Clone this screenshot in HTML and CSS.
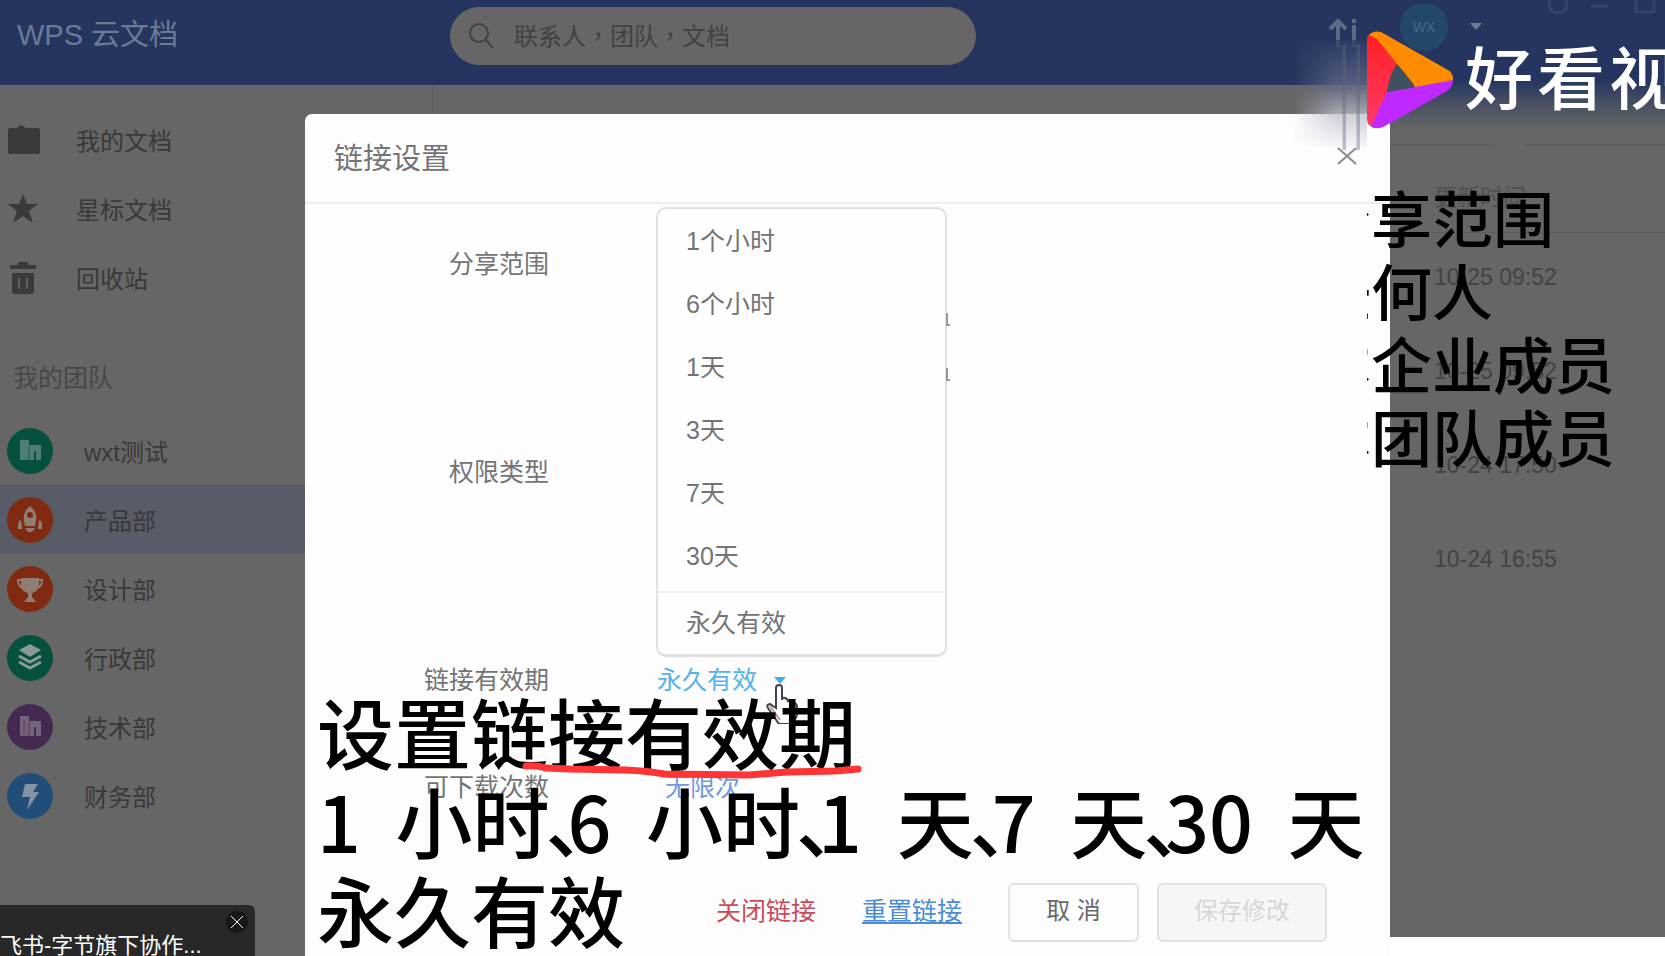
FILE: index.html
```html
<!DOCTYPE html>
<html lang="zh-CN">
<head>
<meta charset="utf-8">
<title>WPS 云文档</title>
<link rel="stylesheet" href="styles.css">
</head>
<body>
<div class="stage">
  <div class="app">
    <header class="topbar">
      <h1 class="brand">WPS 云文档</h1>
      <label class="search">
        <svg width="28" height="28" viewBox="0 0 28 28" fill="none" stroke="#414141" stroke-width="2"><circle cx="11" cy="11" r="9"/><path d="M17 17l8 9"/></svg>
        <input type="search" lang="zh-Hant" aria-label="搜索" placeholder="联系人，团队，文档">
      </label>
      <div class="tools">
        <svg width="30" height="30" viewBox="0 0 30 30" fill="none" stroke="#5f6a83" stroke-width="4"><path d="M10 30V5M2 12l8-8 8 8M26 8v22M26 2v4"/></svg>
        <span class="avatar">WX</span>
        <svg class="caret" width="12" height="7" viewBox="0 0 12 7"><path d="M0 0h12L6 7z" fill="#6f7890"/></svg>
        <svg class="winctl" width="110" height="16" viewBox="0 0 110 16" fill="none" stroke="#34436c" stroke-width="3"><path d="M4 0a9 9 0 1 0 16 0M45 6h17M90 0v12h18V0"/></svg>
      </div>
    </header>
    <div class="content">
      <aside class="sidebar">
        <nav class="nav">
          <a class="nav-item" href="#"><svg width="34" height="32" viewBox="0 0 34 32" fill="#3a3a3a"><path d="M3 4h7l4-3 5 3h12q2 0 2 2v22q0 2-2 2H3q-2 0-2-2V6q0-2 2-2z"/></svg>我的文档</a>
          <a class="nav-item" href="#"><svg width="34" height="32" viewBox="0 0 34 32" fill="#3a3a3a"><path d="M16 1l4 10h11l-9 7 4 12-10-7-10 7 4-12-9-7h11z"/></svg>星标文档</a>
          <a class="nav-item" href="#"><svg width="34" height="34" viewBox="0 0 34 34"><path d="M11 4V1h10v3h8v4H3V4zM5 12h22v18q0 3-3 3H8q-3 0-3-3z" fill="#3a3a3a"/><path d="M12 17v11M20 17v11" stroke="#606060" stroke-width="2"/></svg>回收站</a>
        </nav>
        <h2 class="group">我的团队</h2>
        <nav class="teams">
          <a class="team" href="#"><svg width="46" height="46" viewBox="0 0 46 46"><circle cx="23" cy="23" r="23" fill="#06503f"/><path d="M13 12h9v5h12v15h-5v-9h-2v9H13z" fill="#4f7d74"/><path d="M22 18v14" stroke="#1f5f51"/></svg>wxt测试</a>
          <a class="team active" href="#"><svg width="46" height="46" viewBox="0 0 46 46"><circle cx="23" cy="23" r="23" fill="#7f2a11"/><path d="M23 9c5 4 7 9 6 15l-1 5H18l-1-5c-1-6 1-11 6-15zM14 23q-3 1-3 5v4h4zM32 23q3 1 3 5v4h-4zM18 31h10l-3 4h-4z" fill="#917e72"/><circle cx="23" cy="18" r="3" fill="#7f2a11"/></svg>产品部</a>
          <a class="team" href="#"><svg width="46" height="46" viewBox="0 0 46 46"><circle cx="23" cy="23" r="23" fill="#7f2a11"/><path d="M14 12h18v7c0 5-3 7-7 8v4l4 5H17l4-5v-4c-4-1-7-3-7-8z" fill="#917e72"/><path d="M15 14h-4c0 5 2 7 5 8M31 14h4c0 5-2 7-5 8" fill="none" stroke="#917e72" stroke-width="2"/></svg>设计部</a>
          <a class="team" href="#"><svg width="46" height="46" viewBox="0 0 46 46"><circle cx="23" cy="23" r="23" fill="#06503f"/><path d="M23 9l11 6-11 7-11-7z" fill="#8a9a94"/><path d="M12 21l11 6 11-6M12 27l11 6 11-6" fill="none" stroke="#8a9a94" stroke-width="3"/></svg>行政部</a>
          <a class="team" href="#"><svg width="46" height="46" viewBox="0 0 46 46"><circle cx="23" cy="23" r="23" fill="#442a50"/><path d="M13 12h9v5h12v15h-5v-9h-2v9H13z" fill="#75627c"/><path d="M22 18v14M17 16v14" stroke="#533b5d"/></svg>技术部</a>
          <a class="team" href="#"><svg width="46" height="46" viewBox="0 0 46 46"><circle cx="23" cy="23" r="23" fill="#214e78"/><path d="M18 11h13l-5 8h6L20 37l3-13h-8z" fill="#8494a2"/></svg>财务部</a>
        </nav>
      </aside>
      <main class="files">
        <div class="rules"><i></i><i></i></div>
        <table class="dates">
          <thead><tr><th>更新时间</th></tr></thead>
          <tbody>
            <tr><td>10-25 09:52</td></tr>
            <tr><td>10-25 09:52</td></tr>
            <tr><td>10-24 17:50</td></tr>
            <tr><td>10-24 16:55</td></tr>
          </tbody>
        </table>
      </main>
    </div>
  </div>

  <section class="modal" role="dialog" aria-labelledby="dlg">
    <header class="modal-head">
      <h2 id="dlg">链接设置</h2>
      <button class="close" type="button" aria-label="关闭"><svg width="20" height="18" viewBox="0 0 20 18" fill="none" stroke="#8c8c90" stroke-width="2"><path d="M1 1l18 16M19 1L1 17"/></svg></button>
    </header>
    <div class="row tall"><span class="label">分享范围</span></div>
    <div class="row tall"><span class="label">权限类型</span></div>
    <div class="row mid">
      <span class="label" id="exp">链接有效期</span>
      <div class="picker">
        <button class="value sky" type="button" aria-haspopup="listbox" aria-expanded="true" aria-labelledby="exp">永久有效<svg width="12" height="7" viewBox="0 0 12 7"><path d="M0 0h12L6 7z" fill="#45aeea"/></svg></button>
        <div class="menu">
          <button type="button">1个小时</button>
          <button type="button">6个小时</button>
          <button type="button">1天</button>
          <button type="button">3天</button>
          <button type="button">7天</button>
          <button type="button">30天</button>
          <button type="button" class="last">永久有效</button>
          <svg class="marks" width="5" height="72" viewBox="0 0 5 72" fill="none" stroke="#99999b" stroke-width="2"><path d="M2 1v12h3M2 56v12h3"/></svg>
        </div>
      </div>
    </div>
    <div class="row low"><span class="label">可下载次数</span><button class="value blue" type="button">无限次</button></div>
    <footer class="modal-foot">
      <a class="danger" href="#">关闭链接</a>
      <a class="reset" href="#">重置链接</a>
      <div class="buttons">
        <button class="btn cancel" type="button">取 消</button>
        <button class="btn save" type="button" disabled>保存修改</button>
      </div>
    </footer>
  </section>

  <div class="haze"></div>
  <svg class="streak" width="36" height="122" viewBox="0 0 36 122" fill="none" stroke="#62677a" stroke-opacity=".4" stroke-width="4"><path d="M8 0v122M24 0v122"/></svg>
  <div class="haze-right"></div>

  <div class="watermark">
    <svg width="88" height="98" viewBox="0 0 88 98">
      <defs><linearGradient id="red" x1="0" y1="0" x2="0" y2="1"><stop offset="0" stop-color="#ff2020"/><stop offset="1" stop-color="#ff3a6c"/></linearGradient></defs>
      <path d="M1 4L8 2 31 32Q24 40 20 60L8 96Q0 96 0 88V8z" fill="url(#red)"/>
      <path d="M2 4Q6-1 14 1L81 39Q87 43 86 50L48 57Q46 52 30 33L10 8z" fill="#ff8c00"/>
      <path d="M20 61L48 56 86 49Q86 56 80 60L18 95Q11 99 4 96z" fill="#bf28ff"/>
      <path d="M30 34Q44 49 48 56L20 61Q23 42 30 34z" fill="#3f505e"/>
    </svg>
    <b>好</b><b>看</b><b>视</b>
  </div>

  <svg class="pointer" width="32" height="40" viewBox="0 0 32 40"><path d="M10 24V4q0-3 3-3t3 3v12q0-3 3-2t3 3q4-2 5 2 4 0 4 4v8l-4 9H13L2 24q-2-4 2-4z" fill="#fff" fill-opacity=".75" stroke="#45404c" stroke-width="2"/><path d="M4 22l10 14" stroke="#c9929b" stroke-width="2"/></svg>

  <div class="caption side">
    <p>分享范围</p>
    <p>任何人</p>
    <p>本企业成员</p>
    <p>本团队成员</p>
  </div>
  <div class="caption bottom">
    <p>设置链接有效期</p>
    <p>1  小时<i>、</i>6  小时<i>、</i>1  天<i>、</i>7  天<i>、</i>30  天</p>
    <p>永久有效</p>
  </div>

  <svg class="underline" width="346" height="20" viewBox="0 0 346 20" fill="none" stroke="#ff3535" stroke-width="7" stroke-linecap="round" stroke-linejoin="round"><path d="M7 7q12-1 20 2l24 1 56 1q22 1 38 4l85 1 38-3 48-1 23-2"/></svg>

  <div class="toast">
    <button type="button" class="toast-close" aria-label="关闭"><svg width="12" height="12" viewBox="0 0 12 12" stroke="#fff" stroke-width="1"><path d="M0 0l12 12M12 0L0 12"/></svg></button>
    <p>飞书-字节旗下协作...</p>
  </div>
</div>
</body>
</html>
```
FILE: styles.css
```css
* { box-sizing: border-box; }
body { margin: 0; background: #fff; font-family: "Liberation Sans", "Noto Sans CJK SC", sans-serif; }
h1, h2, p { margin: 0; font-weight: 400; }
button { font: inherit; color: inherit; border: 0; background: none; padding: 0; text-align: left; }
a { color: inherit; text-decoration: none; }
svg { flex: none; display: block; }

.stage { position: relative; height: 100vh; overflow: hidden; }
.app { height: 100vh; display: flex; flex-direction: column; background: #fff; }

.topbar { position: relative; display: flex; align-items: flex-start; height: 85px; background: #25355f; padding: 7px 0 0 17px; }
.brand { flex: 0 0 433px; font-size: 29px; line-height: 56px; color: #6b7a96; }
.search { display: flex; align-items: center; gap: 18px; width: 526px; height: 58px; border-radius: 29px; background: #676565; padding: 0 18px; }
.search input { flex: 1; min-width: 0; border: 0; outline: 0; background: none; padding: 0 0 4px; font: 24px "Noto Sans CJK TC", sans-serif; color: #424242; }
.search input::placeholder { color: #424242; opacity: 1; }
.tools { margin-left: auto; display: flex; align-items: flex-start; gap: 44px; padding: 10px 183px 0 0; }
.tools > svg:first-child { margin-right: -2px; }
.avatar { display: grid; place-items: center; width: 48px; height: 48px; margin-top: -14px; border-radius: 24px; background: #23476a; color: #3f6b85; font-size: 14px; }
.caret { margin: 6px 0 0 -22px; }
.winctl { position: absolute; right: 9px; top: 0; }

.content { flex: 1; display: flex; min-height: 0; }
.sidebar { flex: 0 0 433px; border-right: 1px solid #5a5a5a; padding-top: 20px; background: #666; color: #393939; font-size: 24px; }
.nav-item, .team { display: flex; align-items: center; height: 69px; padding-left: 7px; }
.nav-item { gap: 35px; }
.team { gap: 31px; }
.team.active { background: #585c66; }
.group { margin: 46px 0 18px 13px; font-size: 25px; line-height: 40px; color: #484848; }
.files { flex: 1; margin-bottom: 19px; background: #666; }
.rules { display: flex; gap: 30px; justify-content: flex-end; padding-top: 59px; }
.rules i { width: 140px; height: 2px; background: #5e5e5e; }
.rules i:first-child { width: 105px; }
.dates { width: 275px; margin: 0 0 0 auto; border-collapse: collapse; font-size: 23px; color: #434343; }
.dates th { height: 86px; padding: 12px 0 0 44px; text-align: left; font-weight: 400; color: #505050; border-bottom: 1px solid #5d5d60; }
.dates td { height: 94px; padding: 0 0 4px 44px; }

.modal { position: absolute; inset: 114px 275px 0 305px; background: #fdfdfe; border-radius: 7px 7px 0 0; font-size: 25px; color: #747476; }
.modal-head { display: flex; align-items: center; justify-content: space-between; height: 90px; padding: 0 33px 4px 29px; border-bottom: 2px solid #eeeef1; margin-bottom: 40px; }
.modal-head h2 { font-size: 29px; }
.row { display: flex; align-items: flex-start; gap: 108px; line-height: 40px; }
.tall { height: 208px; }
.mid { height: 107px; }
.low { height: 116px; }
.label { width: 244px; text-align: right; }
.picker { position: relative; }
.value { display: flex; align-items: center; gap: 17px; }
.sky { color: #55b3ec; }
.blue { color: #6f9ade; padding-left: 8px; }
.menu { position: absolute; left: -1px; bottom: 43px; width: 291px; border: 2px solid #e1e1e5; border-bottom-width: 3px; border-radius: 10px; background: #fefefe; padding-top: 2px; }
.menu button { display: block; width: 100%; height: 63px; padding: 0 0 4px 28px; }
.menu .last { margin-top: 2px; border-top: 2px solid #f0f0f2; padding-bottom: 2px; }
.marks { position: absolute; right: -5px; top: 103px; }
.modal-foot { display: flex; align-items: center; justify-content: flex-end; gap: 46px; padding-right: 63px; }
.danger, .reset { padding-bottom: 8px; }
.danger { color: #cd4a58; }
.reset { color: #4b8cd6; text-decoration: underline; }
.buttons { display: flex; gap: 18px; }
.btn { height: 59px; border: 2px solid #e2e2e6; border-radius: 6px; font-size: 24px; padding-bottom: 8px; text-align: center; }
.cancel { width: 131px; color: #69696b; }
.save { width: 170px; color: #d6d6d9; background: #f6f6f8; }

.haze { position: absolute; right: 298px; top: 40px; width: 75px; height: 107px; background: linear-gradient(#2c3b66, #6a6f88 45%, #b9bbc9 68%, #f6f5f9); opacity: .75; mask-image: linear-gradient(90deg, transparent, #000 60%); }
.haze-right { position: absolute; right: 0; top: 80px; width: 275px; height: 50px; background: linear-gradient(#25355f, #464e62 45%, #666); }
.streak { position: absolute; right: 294px; top: 44px; height: 106px; }
.watermark { position: absolute; left: calc(100% - 298px); top: 31px; display: flex; align-items: flex-start; gap: 4px; color: #fff; font: 68px/88px "Noto Sans CJK SC", sans-serif; }
.watermark svg { margin-right: 6px; }
.watermark b { font-weight: 500; }

.caption { position: absolute; color: #000; font-family: "Noto Sans CJK SC", sans-serif; font-weight: 500; }
.caption p { white-space: pre; font-weight: inherit; }
.side { left: calc(100% - 298px); right: 0; top: 180px; overflow: hidden; font-size: 61px; line-height: 73px; text-indent: -57px; }
.bottom { left: 317px; top: 686px; font-size: 77px; line-height: 89px; }
.bottom i { display: inline-block; width: 18px; font-style: normal; text-indent: -4px; }
.pointer { position: absolute; left: 766px; top: 684px; }
.underline { position: absolute; left: 519px; top: 759px; }

.toast { position: absolute; left: 0; bottom: 0; width: 255px; height: 51px; overflow: hidden; border-radius: 0 6px 0 0; background: #282828; color: #fff; }
.toast p { font-size: 22px; line-height: 30px; margin-top: 26px; }
.toast-close { position: absolute; right: 7px; top: 6px; width: 22px; height: 22px; border-radius: 11px; background: #171717; display: grid; place-items: center; }
```
